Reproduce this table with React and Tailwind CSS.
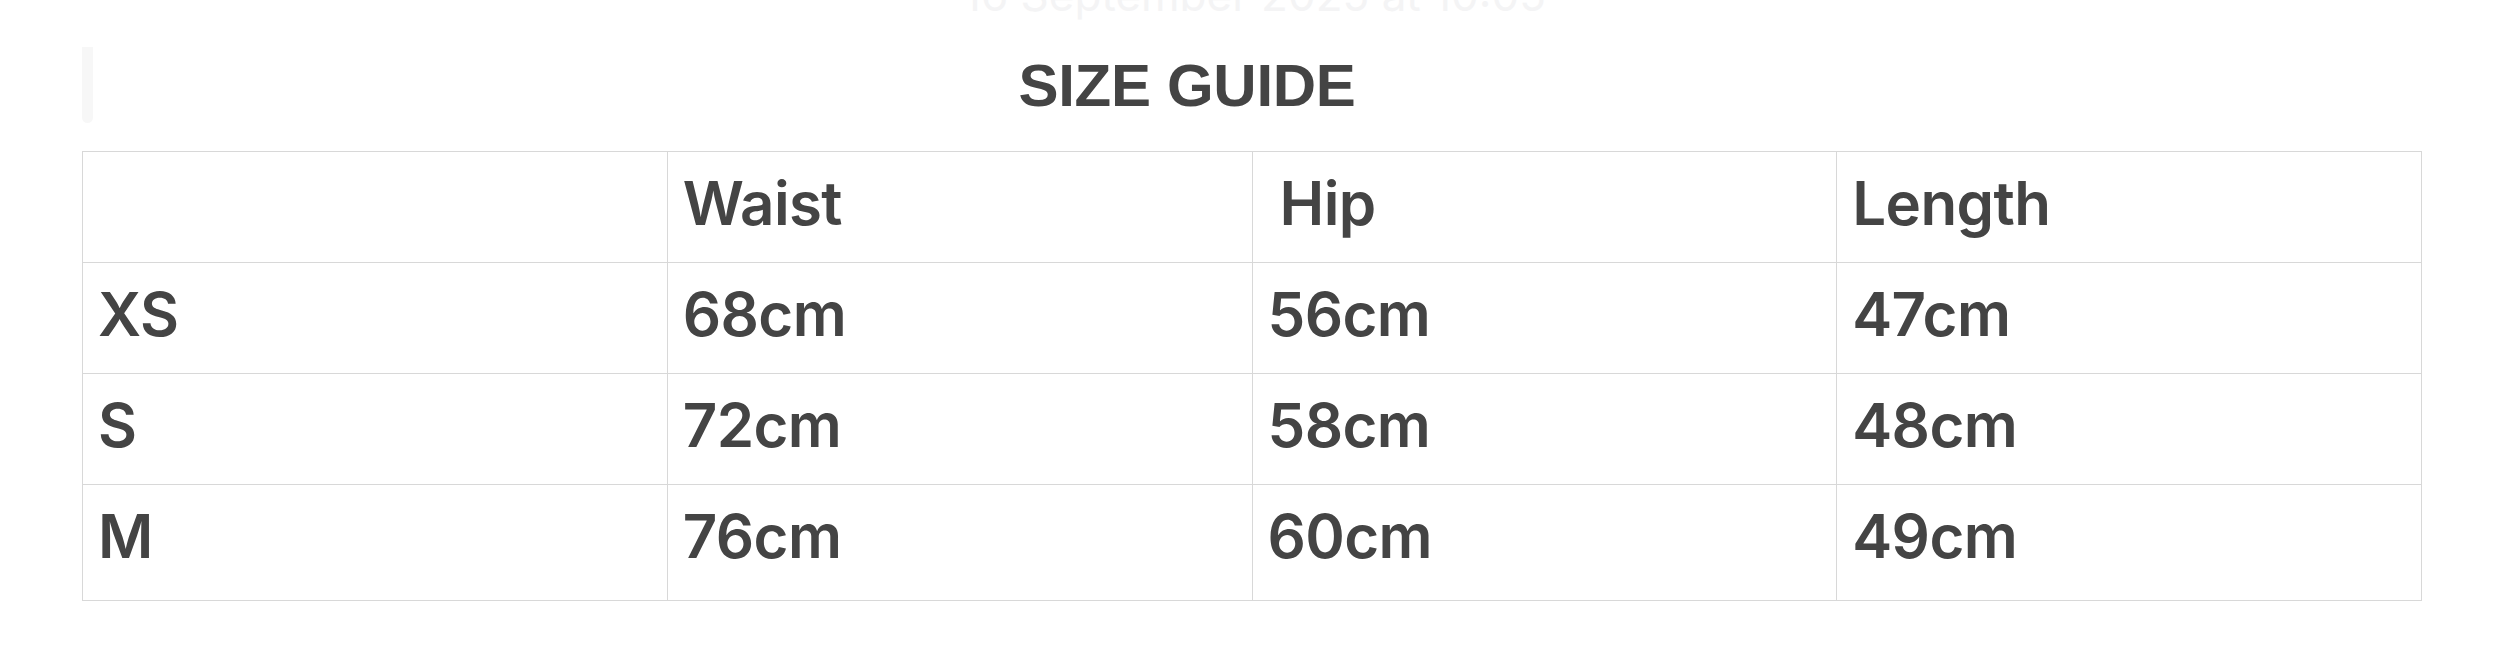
import React from 'react'

const rows = [
  ['XS', '68cm', '56cm', '47cm'],
  ['S', '72cm', '58cm', '48cm'],
  ['M', '76cm', '60cm', '49cm'],
]

const Cell = ({ children, last }) => (
  <td
    className={`border border-[#d8d8d8] pl-[15px] pt-[15px] align-top text-[60px] leading-[72px] font-semibold tracking-[-0.6px] text-[#444444] ${last ? 'pb-[28px]' : 'pb-[23px]'}`}
  >
    {children}
  </td>
)

export default function App() {
  return (
    <div className="w-[2509px] h-[655px] overflow-hidden bg-white font-['Inter',sans-serif]">
      <div className="-mt-[28px] text-center text-[44px] leading-[46px] text-[#f4f4f5]">
        16 September 2025 at 10:05
      </div>

      <div className="mt-[29px] mx-[82px] flex items-center h-[76px]">
        <div className="w-[11px] h-[76px] rounded-b-full bg-[#f7f7f7]"></div>
        <h2 className="flex-1 pr-[146px] text-center font-['Liberation_Sans',Arial,sans-serif] font-bold text-[60px] leading-[69px] tracking-[-0.3px] text-[#444444]">
          SIZE GUIDE
        </h2>
      </div>

      <table className="mt-[28px] ml-[82px] w-[2340px] table-fixed border-collapse">
        <thead>
          <tr>
            <Cell></Cell>
            <Cell>Waist</Cell>
            <Cell><span className="ml-[12px]">Hip</span></Cell>
            <Cell>Length</Cell>
          </tr>
        </thead>
        <tbody>
          {rows.map((r, i) => (
            <tr key={r[0]}>
              {r.map((v, j) => (
                <Cell key={j} last={i === rows.length - 1}>{v}</Cell>
              ))}
            </tr>
          ))}
        </tbody>
      </table>
    </div>
  )
}
